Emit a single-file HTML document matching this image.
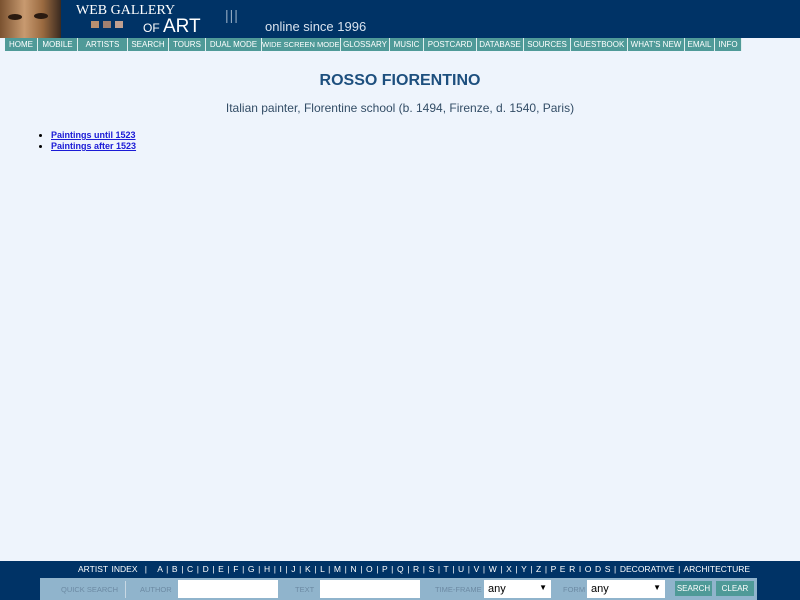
<!DOCTYPE html>
<html><head><meta charset="utf-8"><style>
*{margin:0;padding:0;box-sizing:border-box}
body{width:800px;height:600px;background:#eef4fc;font-family:"Liberation Sans",sans-serif;position:relative;overflow:hidden}
.hdr{position:absolute;left:0;top:0;width:800px;height:38px;background:#003366}
.nav{position:absolute;left:0;top:38px;width:800px;height:13px;background:#eef4fc}
.nav div{position:absolute;top:0;height:13px;background:#4f9a98;color:#fff;font-size:8px;line-height:13px;text-align:center;border-right:1px solid #dfeeee;white-space:nowrap;overflow:hidden}
.a{position:absolute;color:#fff}
.bot{position:absolute;left:0;top:561px;width:800px;height:39px;background:#003366}
.qs{position:absolute;left:40px;top:578px;width:717px;height:22px;background:#90b4cc}
.lbl{position:absolute;font-size:7.5px;color:#6c8aa3;top:7px}
.inp{position:absolute;background:#fff;top:2px;height:18px}
.btn{position:absolute;top:3px;height:15px;background:#4f9a98;color:#fff;font-size:8px;line-height:15px;text-align:center}
</style></head><body>
<div class="hdr">
 <div style="position:absolute;left:0;top:0;width:61px;height:38px;background:linear-gradient(90deg,#7a5230,#c89a70 40%,#9a6a40 70%,#3a2a20)"></div>
 <div style="position:absolute;left:8px;top:14px;width:14px;height:6px;background:#2a1a10;border-radius:50%"></div>
 <div style="position:absolute;left:34px;top:13px;width:14px;height:6px;background:#2a1a10;border-radius:50%"></div>
 <div class="a" style="left:76px;top:3px;font-family:'Liberation Serif',serif;font-size:14px">WEB GALLERY</div>
 <div style="position:absolute;left:91px;top:21px;width:32px;height:7px;background:linear-gradient(90deg,#b89070 0 25%,#003366 25% 37%,#a08070 37% 62%,#003366 62% 75%,#c0a090 75%)"></div>
 <div class="a" style="left:143px;top:16px;font-size:19px"><span style="font-size:12px">OF </span>ART</div>
 <div class="a" style="left:225px;top:7px;font-size:14px;color:#8fa8c0;letter-spacing:1px">|||</div>
 <div class="a" style="left:265px;top:19px;font-size:13px;color:#d8e2ee">online since 1996</div>
</div>
<div class="nav">
<div style="left:5px;width:33px">HOME</div>
<div style="left:38px;width:40px">MOBILE</div>
<div style="left:78px;width:50px">ARTISTS</div>
<div style="left:128px;width:41px">SEARCH</div>
<div style="left:169px;width:37px">TOURS</div>
<div style="left:206px;width:56px">DUAL MODE</div>
<div style="left:262px;width:79px;font-size:7.5px">WIDE SCREEN MODES</div>
<div style="left:341px;width:49px">GLOSSARY</div>
<div style="left:390px;width:34px">MUSIC</div>
<div style="left:424px;width:53px">POSTCARD</div>
<div style="left:477px;width:47px">DATABASE</div>
<div style="left:524px;width:47px">SOURCES</div>
<div style="left:571px;width:57px">GUESTBOOK</div>
<div style="left:628px;width:57px">WHAT'S NEW</div>
<div style="left:685px;width:30px">EMAIL</div>
<div style="left:715px;width:27px">INFO</div>
</div>
<div style="position:absolute;left:0;top:72px;width:800px;text-align:center;font-size:16px;font-weight:bold;color:#1d4f7e">ROSSO FIORENTINO</div>
<div style="position:absolute;left:0;top:101px;width:800px;text-align:center;font-size:12px;color:#334d66">Italian painter, Florentine school (b. 1494, Firenze, d. 1540, Paris)</div>
<ul style="position:absolute;left:51px;top:130px;font-size:9px;font-weight:bold;line-height:11px;list-style:disc">
<li><a style="color:#1a1ad6;text-decoration:underline">Paintings until 1523</a></li>
<li><a style="color:#1a1ad6;text-decoration:underline">Paintings after 1523</a></li>
</ul>
<div class="bot">
 <div class="a" style="left:78px;top:3px;font-size:8.5px;white-space:nowrap;word-spacing:1.25px">ARTIST INDEX &nbsp;| &nbsp; A | B | C | D | E | F | G | H | I | J | K | L | M | N | O | P | Q | R | S | T | U | V | W | X | Y | Z | P E R I O D S | DECORATIVE | ARCHITECTURE</div>
</div>
<div class="qs">
 <div class="lbl" style="left:21px">QUICK SEARCH</div>
 <div style="position:absolute;left:85px;top:3px;width:1px;height:17px;background:#c8d8e4"></div>
 <div class="lbl" style="left:100px">AUTHOR</div>
 <div class="inp" style="left:138px;width:100px"></div>
 <div class="lbl" style="left:255px">TEXT</div>
 <div class="inp" style="left:280px;width:100px"></div>
 <div class="lbl" style="left:395px">TIME-FRAME</div>
 <div class="inp" style="left:444px;width:67px;font-size:11px;padding:3px 4px">any<span style="position:absolute;right:4px;top:3px;font-size:8px">▼</span></div>
 <div class="lbl" style="left:523px">FORM</div>
 <div class="inp" style="left:547px;width:78px;font-size:11px;padding:3px 4px">any<span style="position:absolute;right:4px;top:3px;font-size:8px">▼</span></div>
 <div class="btn" style="left:635px;width:37px">SEARCH</div>
 <div class="btn" style="left:676px;width:38px">CLEAR</div>
</div>
</body></html>
